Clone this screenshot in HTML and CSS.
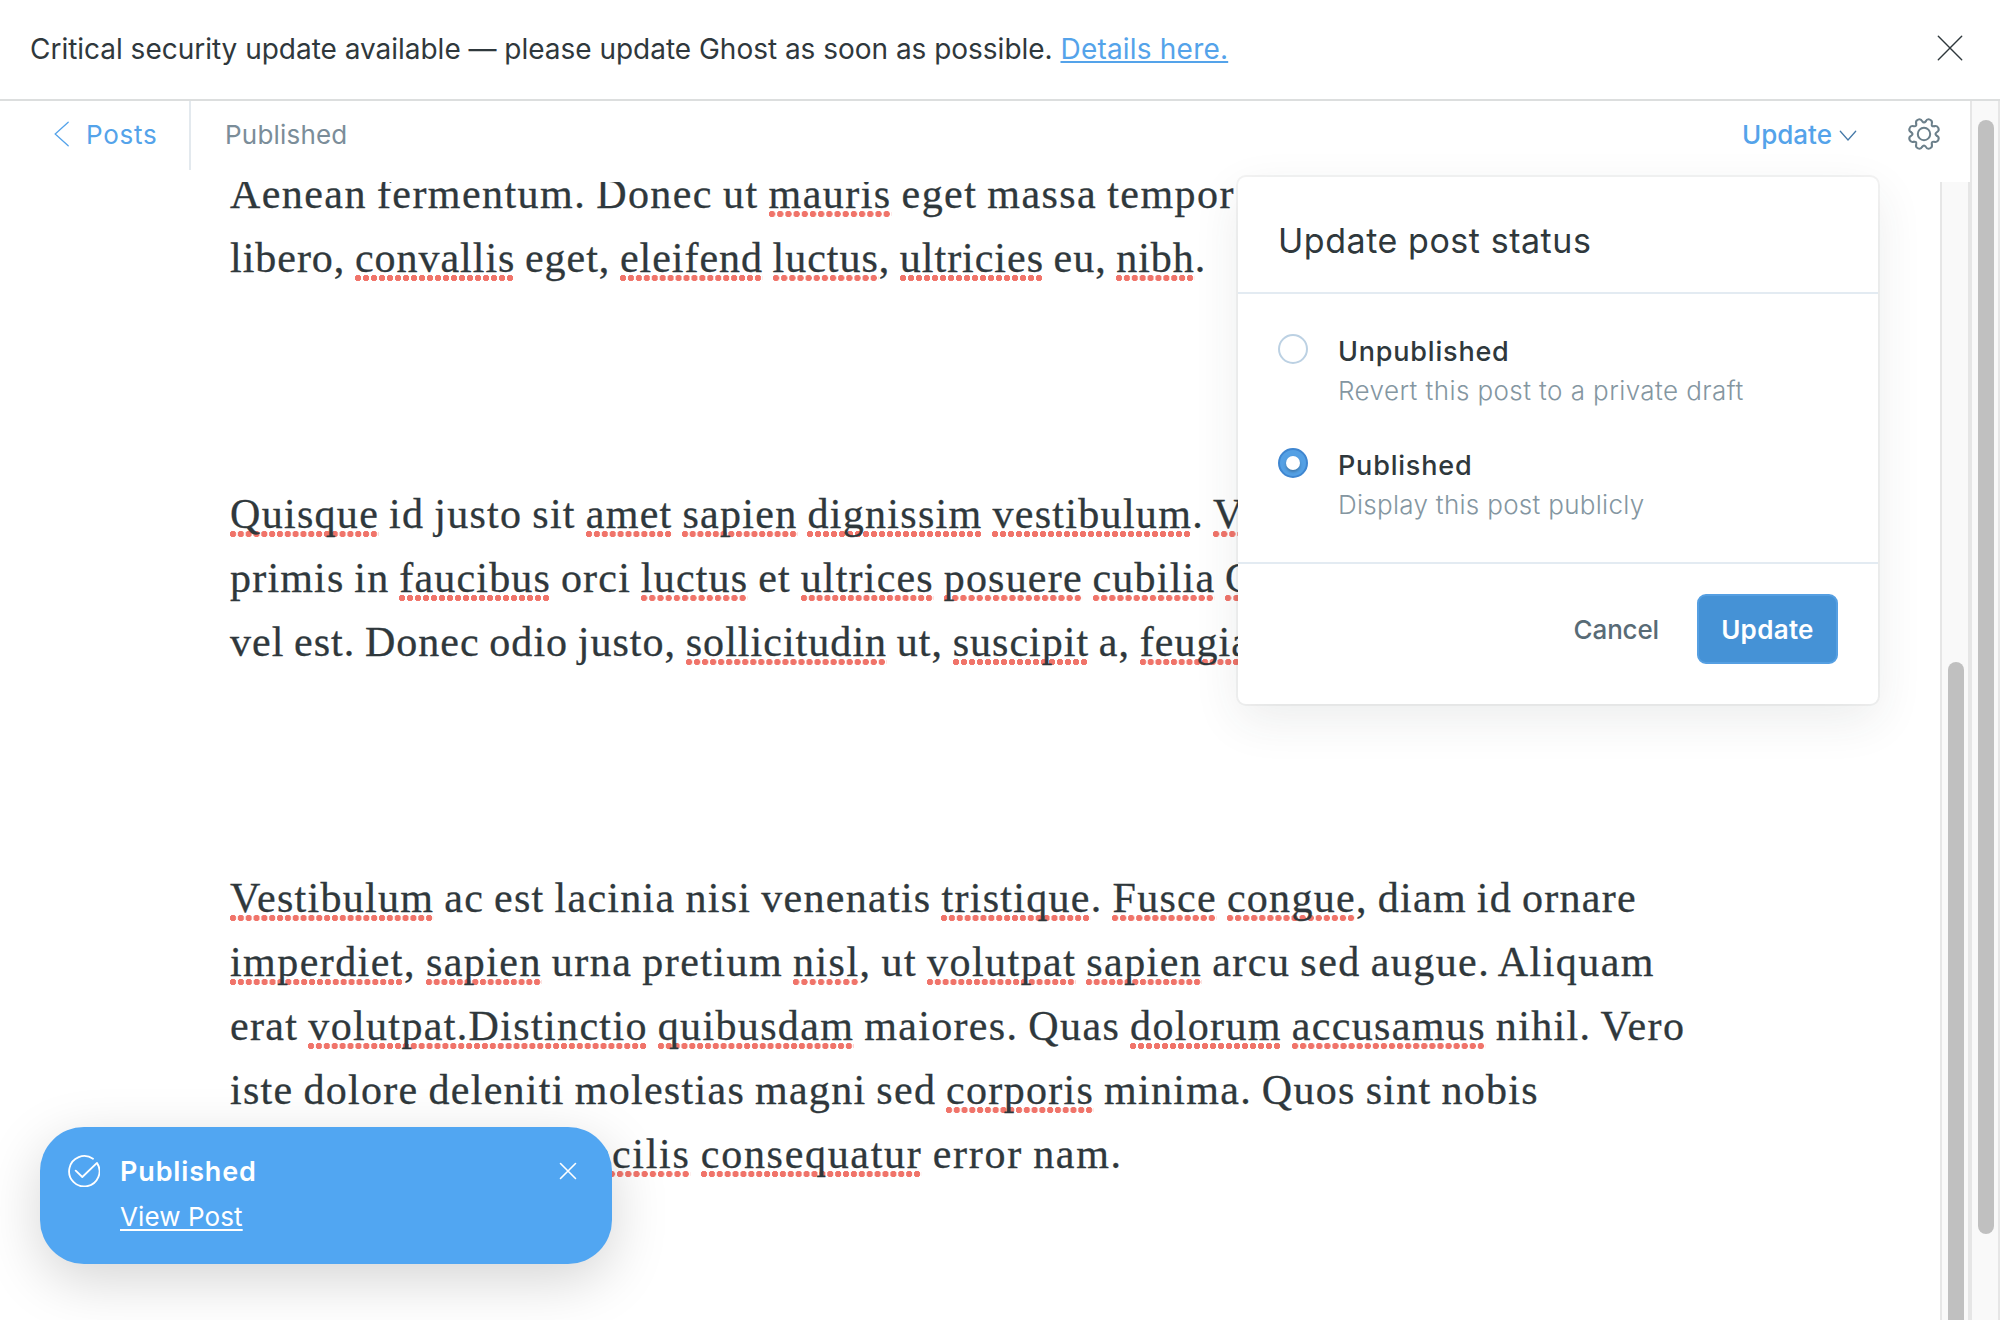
FILE: index.html
```
<!DOCTYPE html>
<html lang="en">
<head>
<meta charset="utf-8">
<title>Edit post</title>
<link rel="stylesheet" href="styles.css">
</head>
<body>
<div class="alert">
  <p class="alert-text"><span>Critical security update available — please update Ghost as soon as possible.</span> <a class="alert-link" href="#">Details here.</a></p>
  <button class="icon-button" aria-label="Close">
    <svg width="26" height="26" viewBox="0 0 26 26" fill="none" stroke="#2f383c" stroke-width="1.4" stroke-linecap="round"><path d="M1.3 1.3l23.4 23.4M24.7 1.3L1.3 24.7"/></svg>
  </button>
</div>

<div class="app">
  <section class="editor">
    <header class="toolbar">
      <a class="back" href="#">
        <svg width="16" height="26" viewBox="0 0 16 26" fill="none" stroke="#54a3ea" stroke-width="1.3" stroke-linecap="round"><path d="M14.2 1.3L1.2 13l13 11.7"/></svg>
        <span>Posts</span>
      </a>
      <span class="status">Published</span>
      <button class="update-trigger">
        <span>Update</span>
        <svg width="18" height="12" viewBox="0 0 18 12" fill="none" stroke="#4579a8" stroke-width="1.3" stroke-linecap="round"><path d="M1.3 1.3L9 10l7.7-8.7"/></svg>
      </button>
      <button class="icon-button settings" aria-label="Settings">
        <svg width="34" height="34" viewBox="-17 -17 34 34" fill="none" stroke="#6b7f8a" stroke-width="2" stroke-linecap="round">
          <defs><path id="tooth" d="M1.68-12.67Q3.16-15.6 5.94-14.4Q8.8-13.3 7.77-10.14Q7.21-7.21 10.15-7.77"/></defs>
          <use href="#tooth"/><use href="#tooth" transform="rotate(45)"/><use href="#tooth" transform="rotate(90)"/><use href="#tooth" transform="rotate(135)"/><use href="#tooth" transform="rotate(180)"/><use href="#tooth" transform="rotate(225)"/><use href="#tooth" transform="rotate(270)"/><use href="#tooth" transform="rotate(315)"/>
          <circle r="6.2"/>
        </svg>
      </button>
    </header>
    <div class="canvas">
      <article class="post">
        <p>
          <span class="line l1">Aenean fermentum. Donec ut <u>mauris</u> eget massa tempor</span>
          <span class="line l2">libero, <u>convallis</u> eget, <u>eleifend</u> <u>luctus</u>, <u>ultricies</u> eu, <u>nibh</u>.</span>
        </p>
        <p>
          <span class="line l3"><u>Quisque</u> id justo sit <u>amet</u> <u>sapien</u> <u>dignissim</u> <u>vestibulum</u>. <u>Ves</u></span>
          <span class="line l4">primis in <u>faucibus</u> orci <u>luctus</u> et <u>ultrices</u> <u>posuere</u> <u>cubilia</u> <u>Cur</u></span>
          <span class="line l5">vel est. Donec odio justo, <u>sollicitudin</u> ut, <u>suscipit</u> a, <u>feugiat</u></span>
        </p>
        <p>
          <span class="line l6"><u>Vestibulum</u> ac est lacinia nisi venenatis <u>tristique</u>. <u>Fusce</u> <u>congue</u>, diam id ornare</span>
          <span class="line l7"><u>imperdiet</u>, <u>sapien</u> urna pretium <u>nisl</u>, ut <u>volutpat</u> <u>sapien</u> arcu sed augue. Aliquam</span>
          <span class="line l8">erat <u>volutpat.Distinctio</u> <u>quibusdam</u> maiores. Quas <u>dolorum</u> <u>accusamus</u> nihil. Vero</span>
          <span class="line l9">iste dolore deleniti molestias magni sed <u>corporis</u> minima. Quos sint nobis</span>
          <span class="line l10"><u>facilis</u> <u>consequatur</u> error nam.</span>
        </p>
      </article>
      <div class="scrollbar inner"><div class="thumb"></div></div>
    </div>
  </section>
  <div class="scrollbar outer"><div class="thumb"></div></div>
</div>

<div class="popover">
  <h2 class="popover-title">Update post status</h2>
  <div class="options">
    <label class="option">
      <span class="radio"></span>
      <span class="option-text"><b>Unpublished</b><small class="revert">Revert this post to a private draft</small></span>
    </label>
    <label class="option">
      <span class="radio checked"></span>
      <span class="option-text"><b>Published</b><small>Display this post publicly</small></span>
    </label>
  </div>
  <div class="popover-footer">
    <button class="cancel">Cancel</button>
    <button class="primary">Update</button>
  </div>
</div>

<aside class="toast">
  <svg class="toast-icon" width="32" height="32" viewBox="0 0 32 32" fill="none" stroke="#fff" stroke-width="1.8" stroke-linecap="round" stroke-linejoin="round"><path d="M7.7 15.7l6.6 6.3L29 7.9A15.2 15.2 0 1 1 25 3.8"/></svg>
  <div class="toast-body">
    <strong>Published</strong>
    <a href="#">View Post</a>
  </div>
  <button class="icon-button toast-close" aria-label="Dismiss">
    <svg width="18" height="18" viewBox="0 0 18 18" fill="none" stroke="#fff" stroke-width="1.6" stroke-linecap="round"><path d="M1.5 1.5l15 15M16.5 1.5l-15 15"/></svg>
  </button>
</aside>
</body>
</html>
```
FILE: styles.css
```
* { box-sizing: border-box; }

body {
  margin: 0;
  height: 1320px;
  display: flex;
  flex-direction: column;
  overflow: hidden;
  background: #fff;
  color: #2f383c;
  font-family: Inter, "Liberation Sans", sans-serif;
  font-size: 26px;
}

button {
  padding: 0;
  border: 0;
  background: none;
  font: inherit;
  color: inherit;
}

svg { display: block; }

/* Alert bar */
.alert {
  flex: none;
  height: 101px;
  display: flex;
  align-items: center;
  justify-content: space-between;
  padding: 0 37px 0 30px;
  border-bottom: 2px solid #dcdede;
}
.alert-text {
  margin: 0;
  font-size: 28px;
  line-height: 99px;
  letter-spacing: -0.02px;
}
.alert-link {
  color: #54a3ea;
  letter-spacing: 0.2px;
  text-decoration-thickness: 2px;
  text-underline-offset: 2px;
  text-decoration-skip-ink: none;
}
.alert .icon-button { margin-bottom: 3px; }

/* Editor */
.app { flex: 1; display: flex; min-height: 0; }
.editor { flex: 1; display: flex; flex-direction: column; min-width: 0; }
.toolbar {
  flex: none;
  height: 81px;
  padding-right: 29px;
  display: flex;
  align-items: flex-start;
}
.toolbar > * { height: 67px; display: flex; align-items: center; }
.toolbar .back {
  width: 191px;
  height: 69px;
  padding: 0 0 3px 54px;
  gap: 16px;
  border-right: 2px solid #e3e9ee;
  color: #54a3ea;
  letter-spacing: 0.75px;
  text-decoration: none;
}
.status {
  flex: 1;
  padding-left: 34px;
  color: #7b8d99;
  letter-spacing: 0.2px;
}
.update-trigger {
  gap: 7px;
  color: #54a3ea;
  font-weight: 500;
}
.update-trigger svg { margin-top: 3px; }
.toolbar .settings { height: 66px; margin-left: 50px; }

.canvas { flex: 1; display: flex; min-height: 0; }
.post {
  flex: 1;
  min-width: 0;
  overflow: hidden;
  padding-left: 230px;
  font: 42px/64px "Liberation Serif", serif;
  -webkit-text-stroke: 0.3px #2f383c;
  white-space: nowrap;
  word-spacing: -1.9px;
}
.post p { margin: 0 0 192px; }
.post p:first-child { margin-top: -20px; }
.line { display: block; }
.l1 { letter-spacing: 1.44px; }
.l2 { letter-spacing: 0.98px; }
.l3 { letter-spacing: 1.3px; }
.l4 { letter-spacing: 1.2px; }
.l5 { letter-spacing: 1.03px; }
.l6 { letter-spacing: 1.3px; }
.l7 { letter-spacing: 1.44px; }
.l8 { letter-spacing: 1.35px; }
.l9 { letter-spacing: 1.3px; }
.l10 { letter-spacing: 1.7px; padding-left: 346px; }

/* Spell-check marks */
.post u {
  text-decoration: none;
  background: radial-gradient(circle at 3px 3px, #f0746a 2.9px, transparent 3.5px) left bottom / 8px 6px;
  background-repeat: round no-repeat;
}

/* Scrollbars */
.scrollbar {
  flex: none;
  width: 30px;
  background: #f9f9f9;
  border: solid #e6e6e6;
  border-width: 0 2px;
  padding-left: 6px;
}
.thumb { width: 16px; border-radius: 8px; background: #c0c0c0; }
.outer { padding-top: 19px; }
.outer .thumb { height: 1114px; }
.inner { padding-top: 480px; }
.inner .thumb { height: 700px; }

/* Publish menu */
.popover {
  position: absolute;
  left: 1238px;
  top: 177px;
  width: 640px;
  height: 527px;
  border-radius: 8px;
  background: #fff;
  box-shadow: 0 0 0 2px rgba(39, 44, 49, 0.05), 0 16px 48px rgba(39, 60, 50, 0.09);
}
.popover-title {
  margin: 0;
  height: 117px;
  padding: 11px 0 0 40px;
  border-bottom: 2px solid #e3ebf2;
  font-size: 34px;
  font-weight: 400;
  line-height: 105px;
  letter-spacing: 0.55px;
}
.options {
  height: 270px;
  padding: 38px 40px 0;
  border-bottom: 2px solid #e3ebf2;
  display: flex;
  flex-direction: column;
  gap: 35px;
}
.option { display: flex; gap: 30px; }
.option-text { display: flex; flex-direction: column; }
.option b {
  padding-top: 1px;
  font-size: 27px;
  font-weight: 500;
  line-height: 38px;
  letter-spacing: 0.8px;
}
.option small {
  font-size: 26px;
  font-weight: 300;
  line-height: 40px;
  letter-spacing: 0.29px;
  color: #8496a1;
}
.option .revert { letter-spacing: 0.42px; }
.radio {
  flex: none;
  width: 30px;
  height: 30px;
  margin-top: 2px;
  border: 2px solid #bcd1e3;
  border-radius: 50%;
  display: flex;
  align-items: center;
  justify-content: center;
}
.radio.checked { border-color: #3f86d0; background: #54a0e4; }
.radio.checked::after {
  content: "";
  width: 14px;
  height: 14px;
  border-radius: 50%;
  background: #fff;
  box-shadow: 0 2px 3px rgba(0, 0, 0, 0.25);
}
.popover-footer {
  display: flex;
  align-items: center;
  justify-content: flex-end;
  gap: 38px;
  padding: 30px 40px 0 0;
}
.cancel { color: #586b76; font-weight: 500; letter-spacing: -0.15px; }
.primary {
  width: 141px;
  height: 70px;
  border: 2px solid #559fe2;
  border-radius: 9px;
  background: #4592d6;
  color: #fff;
  font-weight: 600;
  letter-spacing: 0.3px;
}

/* Notification */
.toast {
  position: absolute;
  left: 40px;
  bottom: 56px;
  width: 572px;
  height: 137px;
  display: flex;
  align-items: flex-start;
  padding: 28px 35px 0 28px;
  border-radius: 44px;
  background: #51a6f2;
  color: #fff;
  box-shadow: 0 16px 56px rgba(0, 0, 0, 0.17);
}
.toast-body {
  flex: 1;
  display: flex;
  flex-direction: column;
  align-items: flex-start;
  padding: 1px 0 0 20px;
}
.toast strong {
  font-size: 27px;
  font-weight: 600;
  line-height: 32px;
  letter-spacing: 0.84px;
}
.toast a {
  color: #fff;
  line-height: 32px;
  margin-top: 13px;
  letter-spacing: 0.1px;
  text-decoration-thickness: 2px;
  text-underline-offset: 3px;
}
.toast-close { margin-top: 7px; }
```
